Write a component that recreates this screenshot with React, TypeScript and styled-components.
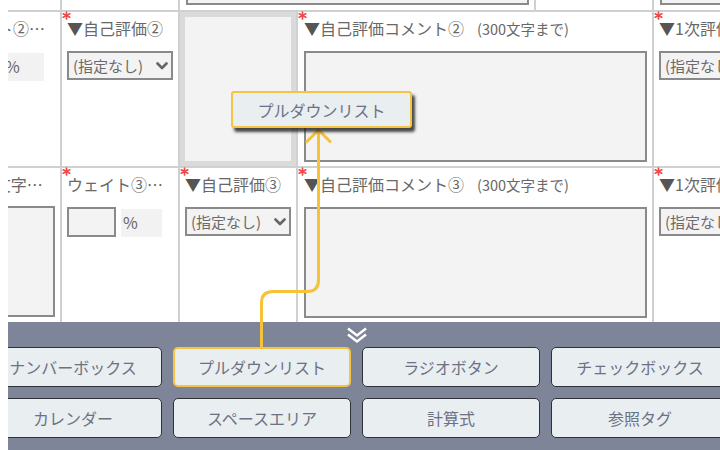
import React from 'react';
import styled, { createGlobalStyle } from 'styled-components';

const GlobalStyle = createGlobalStyle`
  html, body { margin: 0; padding: 0; background: #fff; }
  body { font-family: "Noto Sans CJK JP", "Noto Sans", sans-serif; }
`;

const Page = styled.div`
  position: relative;
  width: 720px;
  height: 450px;
  overflow: hidden;
  box-sizing: border-box;
  padding-left: 8px;
  display: flex;
  flex-direction: column;
  background: #fff;
`;

const Sheet = styled.div`
  height: 322px;
  flex: none;
  overflow: hidden;
`;

const Rows = styled.div`
  margin-top: -144px;
  display: flex;
  flex-direction: column;
`;

const Row = styled.div<{ $shift: number }>`
  display: flex;
  flex: none;
  margin-left: ${(p) => p.$shift}px;
  height: 156px;
  box-sizing: border-box;
  border-bottom: 2px solid #d0d0d0;
`;

const Cell = styled.div<{ $w: number; $pl?: number; $flush?: boolean }>`
  position: relative;
  flex: none;
  width: ${(p) => p.$w}px;
  box-sizing: border-box;
  border-right: 2px solid #d0d0d0;
  padding: ${(p) => (p.$flush ? '0' : `6px 5px 0 ${p.$pl ?? 5}px`)};
  display: flex;
  flex-direction: column;
  align-items: flex-start;
`;

const DropZone = styled.div`
  flex: 1;
  align-self: stretch;
  border: 5px solid #dadada;
  background: #f3f3f3;
`;

const Required = styled.svg`
  position: absolute;
  left: 0;
  top: -1px;
`;

const Label = styled.div<{ $max?: number }>`
  font-size: 16px;
  line-height: 20px;
  color: #686868;
  white-space: nowrap;
  overflow: hidden;
  text-overflow: ellipsis;
  max-width: ${(p) => (p.$max ? `${p.$max}px` : '100%')};
`;

const Tri = styled.span`
  color: #555;
`;

const Note = styled.span`
  font-size: 14.5px;
  margin-left: 13px;
`;

const SelectBox = styled.div`
  margin-top: 13px;
  width: 106px;
  height: 29px;
  box-sizing: border-box;
  border: 2px solid #8a8a8a;
  background: #f3f3f3;
  display: flex;
  align-items: center;
  justify-content: space-between;
  padding: 0 3px 0 4px;
  font-size: 15px;
  color: #6a6a6a;
  white-space: nowrap;
`;

const CommentBox = styled.textarea<{ $w: number; $top?: number }>`
  display: block;
  margin: ${(p) => p.$top ?? 12}px 0 0;
  width: ${(p) => p.$w}px;
  height: 111px;
  box-sizing: border-box;
  border: 2px solid #8a8a8a;
  background: #f3f3f3;
  resize: none;
  padding: 0;
  font: inherit;
  outline: none;
`;

const WeightRow = styled.div`
  margin-top: 13px;
  display: flex;
  gap: 5px;
  align-items: flex-start;
`;

const WeightInput = styled.input`
  width: 49px;
  height: 30px;
  box-sizing: border-box;
  border: 2px solid #8a8a8a;
  background: #f3f3f3;
  padding: 0;
  outline: none;
`;

const Percent = styled.span`
  margin-top: 2px;
  width: 41px;
  height: 28px;
  box-sizing: border-box;
  padding-left: 2px;
  background: #f2f2f2;
  font-size: 16px;
  line-height: 26px;
  color: #666;
`;

const Panel = styled.div`
  flex: 1;
  background: #7f8599;
  overflow: hidden;
`;

const PanelInner = styled.div`
  margin-left: -24px;
  width: 745px;
  display: flex;
  flex-direction: column;
  align-items: center;
`;

const Collapse = styled.div`
  height: 25px;
  box-sizing: border-box;
  padding-top: 3px;
`;

const ToolGrid = styled.div`
  display: grid;
  grid-template-columns: repeat(4, 178px);
  grid-auto-rows: 40px;
  gap: 11px;
`;

const ToolButton = styled.div<{ $active?: boolean }>`
  box-sizing: border-box;
  border-radius: 5px;
  border: ${(p) => (p.$active ? '2px solid #f6c445' : '1px solid #2f3136')};
  background: #e9eef1;
  color: #6c7184;
  font-size: 16px;
  display: flex;
  align-items: center;
  justify-content: center;
  white-space: nowrap;
`;

const DragGhost = styled.div`
  position: absolute;
  left: 231px;
  top: 91px;
  width: 181px;
  height: 37px;
  box-sizing: border-box;
  border: 2px solid #f6c445;
  border-radius: 3px;
  background: #e9eef1;
  color: #6c7184;
  font-size: 16px;
  display: flex;
  align-items: center;
  justify-content: center;
  box-shadow: 3px 4px 3px rgba(30, 30, 30, 0.8);
  z-index: 3;
`;

const Overlay = styled.svg`
  position: absolute;
  left: 0;
  top: 0;
  pointer-events: none;
  z-index: 2;
`;

const Star = () => (
  <Required width="9" height="9" viewBox="0 0 9 9">
    <g stroke="#f04848" strokeWidth="1.7" strokeLinecap="round">
      <path d="M4.5 1V8" />
      <path d="M1.2 2.8L7.8 6.2" />
      <path d="M1.2 6.2L7.8 2.8" />
    </g>
  </Required>
);

const Chevron = () => (
  <svg width="12" height="8" viewBox="0 0 12 8">
    <polyline
      points="1.5,1.5 6,6 10.5,1.5"
      fill="none"
      stroke="#666"
      strokeWidth="2.6"
      strokeLinecap="round"
      strokeLinejoin="round"
    />
  </svg>
);

const SMALL = 118;
const WIDE = 356;

/* Row scrolled mostly out of view: only the lower edges of its cells show */
const EmptyCell = ({ w }: { w: number }) => <Cell $w={w} />;

const TailCommentCell = ({ w = WIDE }: { w?: number }) => (
  <Cell $w={w} $pl={6}>
    <CommentBox readOnly $w={w - 13} $top={32} />
  </Cell>
);

const SelectCell = ({ label }: { label: string }) => (
  <Cell $w={SMALL}>
    <Star />
    <Label>
      <Tri>▼</Tri>
      {label}
    </Label>
    <SelectBox>
      <span>(指定なし)</span>
      <Chevron />
    </SelectBox>
  </Cell>
);

const WeightCell = ({ n }: { n: string }) => (
  <Cell $w={SMALL}>
    <Star />
    <Label>{`ウェイト${n}（比率）`}</Label>
    <WeightRow>
      <WeightInput readOnly />
      <Percent>%</Percent>
    </WeightRow>
  </Cell>
);

const CommentCell = ({
  n,
  w = WIDE,
  max,
  full,
}: {
  n: string;
  w?: number;
  max?: number;
  full?: boolean;
}) => (
  <Cell $w={w} $pl={6}>
    <Star />
    {full ? (
      <Label $max={max}>
        <Tri>▼</Tri>
        {`自己評価コメント${n}（300文字まで）`}
      </Label>
    ) : (
      <Label $max={max}>
        <Tri>▼</Tri>
        {`自己評価コメント${n}`}
        <Note>(300文字まで)</Note>
      </Label>
    )}
    <CommentBox readOnly $w={w - 13} />
  </Cell>
);

const tools = [
  'ナンバーボックス',
  'プルダウンリスト',
  'ラジオボタン',
  'チェックボックス',
  'カレンダー',
  'スペースエリア',
  '計算式',
  '参照タグ',
];

export default function App() {
  return (
    <>
      <GlobalStyle />
      <Page>
        <Sheet>
          <Rows>
            <Row $shift={-64}>
              <EmptyCell w={SMALL} />
              <EmptyCell w={SMALL} />
              <TailCommentCell />
              <EmptyCell w={SMALL} />
              <TailCommentCell />
            </Row>
            <Row $shift={-64}>
              <WeightCell n="②" />
              <SelectCell label="自己評価②" />
              <Cell $w={SMALL} $flush>
                <DropZone />
              </Cell>
              <CommentCell n="②" />
              <SelectCell label="1次評価②" />
            </Row>
            <Row $shift={-222}>
              <CommentCell n="①" w={276} max={256} full />
              <WeightCell n="③" />
              <SelectCell label="自己評価③" />
              <CommentCell n="③" />
              <SelectCell label="1次評価③" />
            </Row>
          </Rows>
        </Sheet>
        <Panel>
          <PanelInner>
            <Collapse>
              <svg width="22" height="17" viewBox="0 0 22 17">
                <g fill="none" stroke="#fff" strokeWidth="2.5">
                  <polyline points="2,1.5 11,8.5 20,1.5" />
                  <polyline points="2,7.5 11,14.5 20,7.5" />
                </g>
              </svg>
            </Collapse>
            <ToolGrid>
              {tools.map((t, i) => (
                <ToolButton key={t} $active={i === 1}>
                  {t}
                </ToolButton>
              ))}
            </ToolGrid>
          </PanelInner>
        </Panel>
        <DragGhost>プルダウンリスト</DragGhost>
        <Overlay width="720" height="450" viewBox="0 0 720 450">
          <g fill="none" stroke="#f5c238" strokeWidth="3" strokeLinejoin="round">
            <path d="M261.5 347 V303 Q261.5 291.5 273 291.5 H307 Q318.5 291.5 318.5 280 V131" />
            <path d="M306 142.5 L318.5 130 L331 142.5" />
          </g>
        </Overlay>
      </Page>
    </>
  );
}
